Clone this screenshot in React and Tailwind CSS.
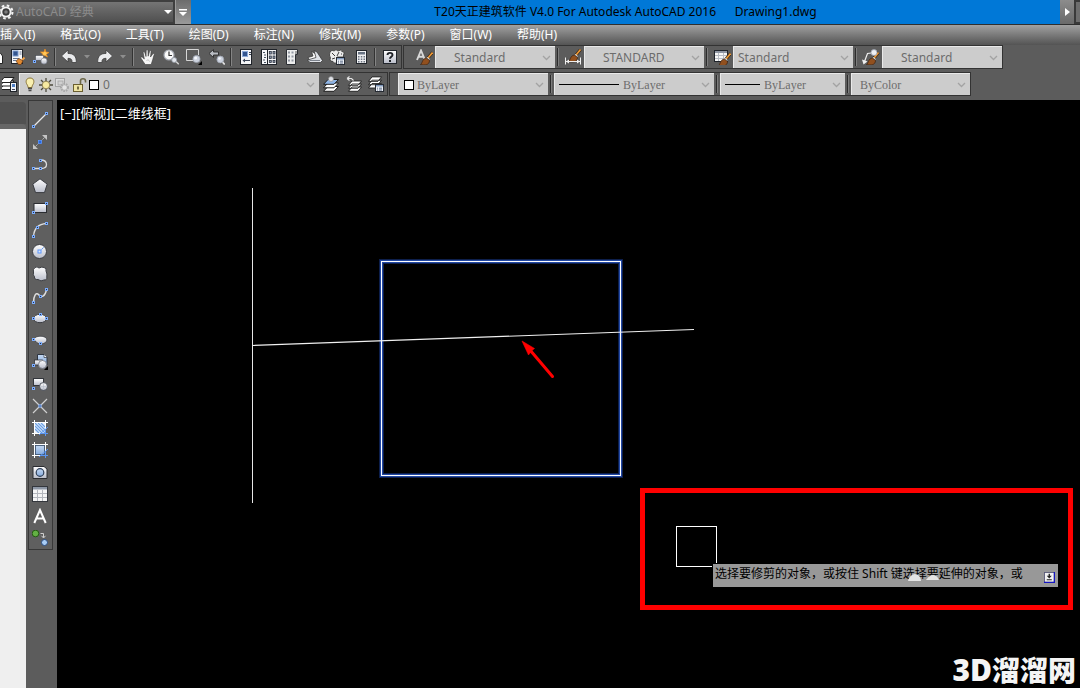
import React from 'react';

const UI = "font-['Noto_Sans','Noto_Sans_CJK_SC',sans-serif]";

/* ---------- shared drawing parts ---------- */

function Svg({ children, w = 16, h = 16 }) {
  return (
    <svg width={w} height={h} viewBox={`0 0 ${w} ${h}`} fill="none" aria-hidden="true" className="block shrink-0">
      <defs>
        <linearGradient id="plate" x1="0" y1="0" x2="0" y2="1">
          <stop offset="0" stopColor="#ffffff" />
          <stop offset="1" stopColor="#b9bdca" />
        </linearGradient>
        <linearGradient id="blueplate" x1="0" y1="0" x2="0" y2="1">
          <stop offset="0" stopColor="#c4d8f2" />
          <stop offset="1" stopColor="#86abdc" />
        </linearGradient>
      </defs>
      {children}
    </svg>
  );
}

const Grip = ({ x, y }) => (
  <rect x={x - 1} y={y - 1} width="2" height="2" fill="#25324a" stroke="#7badff" strokeWidth="1" />
);

const Brush = () => (
  <g>
    <path d="M11 8 L15.5 2.5" stroke="#3a2a1c" strokeWidth="3" />
    <path d="M11 8 L15.5 2.5" stroke="#f09a35" strokeWidth="1.6" />
    <path d="M10 7.5 L12.5 9.5" stroke="#d8d8d8" strokeWidth="1.4" />
    <path d="M3.5 14.5 C5.5 13.5 5 8.5 9.5 8 L12.5 10.5 C12.5 15 8 15.500 3.500 14.500Z" fill="#91501f" stroke="#3e2412" strokeWidth=".7" />
  </g>
);

const Lens = () => (
  <g>
    <path d="M13 12.500 L15.800 15.500" stroke="#e3e3e3" strokeWidth="1.800" />
    <circle cx="11.300" cy="10.500" r="3.400" fill="#cdd3df" stroke="#9da3b0" strokeWidth=".8" />
    <circle cx="10.500" cy="9.500" r="1.300" fill="#f4f6fa" />
  </g>
);

const Sheets = ({ top = '#ffffff' }) => (
  <g stroke="#1f1f1f" strokeWidth="1">
    <path d="M.5 15.300 L5 10.500 H15.500 L11 15.300Z" fill="#ffffff" />
    <path d="M.5 11.800 L5 7 H15.500 L11 11.800Z" fill="#ffffff" />
    <path d="M.5 8.300 L5 3.500 H15.500 L11 8.300Z" fill={top} />
  </g>
);

const MiniPanel = ({ x = 8, y = 8 }) => (
  <g>
    <rect x={x + 0.5} y={y + 0.5} width="8" height="7" fill="#eef1f6" stroke="#262b33" />
    <rect x={x + 1} y={y + 1} width="7" height="1.5" fill="#7f97bb" />
    <path d={`M${x + 2} ${y + 4.2}h1M${x + 4} ${y + 4.2}h3M${x + 2} ${y + 6}h1M${x + 4} ${y + 6}h3`} stroke="#4d5f7c" strokeWidth=".9" />
  </g>
);

/* ---------- standard toolbar icons ---------- */

const TB = {
  matchDoc: (
    <Svg>
      <rect x="1.5" y=".5" width="11" height="14" fill="#f5f6f8" stroke="#20242b" />
      <rect x="3" y="2" width="5" height="5" fill="#34568f" stroke="#7d9cd0" />
      <path d="M9.5 3h2M9.5 5h2M3 9.5h6M3 11.5h3" stroke="#65758f" />
      <path d="M12 11 L14.5 8.5" stroke="#eaa04b" strokeWidth="2" />
      <path d="M6 12 L9 9.5 L13 12 L11 15.5 H8.5Z" fill="#e08a32" stroke="#6a3710" strokeWidth=".7" />
    </Svg>
  ),
  blockEdit: (
    <Svg>
      <path d="M12 0 L12.8 3 L16 3.5 L13.3 5.3 L14.5 8 L11.8 6.4 L9 8 L10 5.2 L7.5 3 L11 3Z" fill="#ffc85a" stroke="#f08c1a" strokeWidth=".7" />
      <rect x="2.5" y="6.5" width="8" height="5" fill="url(#plate)" stroke="#454a54" strokeWidth=".6" />
      <circle cx="11" cy="12" r="3" fill="url(#plate)" stroke="#858b98" strokeWidth=".7" />
      <Grip x={1.5} y={12.5} />
    </Svg>
  ),
  undo: (
    <Svg>
      <path d="M.5 7 L7 1 V4.500 C12.500 4.300 15.500 7 15.300 13.500 H11 C11.300 10.500 10 9.300 7 9.300 V13Z" fill="#e9eaec" stroke="#3d3d3d" strokeWidth=".8" />
    </Svg>
  ),
  redo: (
    <Svg>
      <path d="M15.500 7 L9 1 V4.500 C3.500 4.300 .5 7 .7 13.500 H5 C4.700 10.500 6 9.300 9 9.300 V13Z" fill="#e9eaec" stroke="#3d3d3d" strokeWidth=".8" />
    </Svg>
  ),
  pan: (
    <Svg>
      <path
        d="M5.2 15.5 C4 13.5 2 11 .8 9 C.6 7.8 2 7.6 2.8 8.6 L4.3 10 L3.1 3.6 C3.2 2.5 4.5 2.4 4.8 3.5 L6 7.5 L6.2 1.6 C6.4 .5 7.8 .5 8 1.6 L8.2 7.2 L9.6 2.2 C10 1.2 11.2 1.5 11.1 2.6 L10.5 8 L12.9 4.7 C13.6 4 14.6 4.6 14.2 5.6 C13 9 12.5 12 11.2 15.5Z"
        fill="#f6f6f6" stroke="#3a3a3a" strokeWidth=".6"
      />
      <path d="M6.5 11.5 C8 10.5 9 11 9.5 12.5" stroke="#c2c2c2" />
    </Svg>
  ),
  zoomRealtime: (
    <Svg>
      <circle cx="6" cy="6" r="5" fill="#fafafa" stroke="#a4a8b0" strokeWidth="1.200" />
      <path d="M6 2.500 V6.500 H9" stroke="#333" strokeWidth="1.200" />
      <path d="M12.500 12 L15.800 15.300" stroke="#d5d5d5" strokeWidth="1.500" />
      <circle cx="11.200" cy="11" r="2.500" fill="#e3e6ec" stroke="#8f959f" strokeWidth=".8" />
    </Svg>
  ),
  zoomWindow: (
    <Svg>
      <path d="M8 11.5 H.5 V.5 H12.5 V6" stroke="#d6d6d6" />
      <circle cx="10.500" cy="10" r="3.600" fill="#cdd3df" stroke="#9da3b0" strokeWidth=".8" />
      <circle cx="9.700" cy="9" r="1.500" fill="#f4f6fa" />
      <path d="M16 12 V16 H12Z" fill="#000" />
    </Svg>
  ),
  zoomPrev: (
    <Svg>
      <path d="M0 4.500 L4.500 .5 V3 H9.500 V6 H4.500 V8.500Z" fill="#b9bcc2" stroke="#2a2a2a" strokeWidth=".9" />
      <Lens />
    </Svg>
  ),
  properties: (
    <Svg>
      <rect x="2.500" y=".5" width="11" height="15" fill="#f5f6f8" stroke="#1e2228" />
      <rect x="4.500" y="2.500" width="5" height="5" fill="#34568f" stroke="#8fabd8" />
      <path d="M11 3.5h2M11 5.5h2M5 11.5h7" stroke="#3c4658" />
      <path d="M7 9.5 v4 L4.500 11.5Z" fill="#3c4658" />
    </Svg>
  ),
  designCenter: (
    <Svg>
      <rect x=".5" y=".5" width="15" height="15" fill="#f5f6f8" stroke="#1e2228" />
      <path d="M6.5 1v14" stroke="#1e2228" />
      <path d="M2 3.5h2M3 6h2M3 8.5h2M2 11h2M3 13.500h2" stroke="#44505f" />
      <g fill="#8f9bb0" stroke="#2d3440" strokeWidth=".8">
        <rect x="8.300" y="2.500" width="2" height="2.500" /><rect x="12" y="2.500" width="2" height="2.500" />
        <rect x="8.300" y="7" width="2" height="2.500" /><rect x="12" y="7" width="2" height="2.500" />
        <rect x="8.300" y="11.500" width="2" height="2" /><rect x="12" y="11.500" width="2" height="2" />
      </g>
    </Svg>
  ),
  toolPalettes: (
    <Svg>
      <path d="M2.500 .5 H13.500 V5.500 H11.500 V15.500 H2.500Z" fill="#eceded" stroke="#2b2e33" />
      <g fill="#9197a2">
        <rect x="4" y="2.500" width="2" height="2" /><rect x="7.500" y="2.500" width="2" height="2" />
        <rect x="4" y="6.500" width="2" height="2" /><rect x="7.500" y="6.500" width="2" height="2" />
        <rect x="4" y="10.500" width="2" height="2" /><rect x="7.500" y="10.500" width="2" height="2" />
      </g>
      <path d="M12 2v3" stroke="#555" />
    </Svg>
  ),
  sheetSet: (
    <Svg>
      <path d="M1 8.500 L6 7 L4.500 2.500 L9 5 L12 9.500 L10 11.500 H3Z" fill="#fafafa" stroke="#303030" strokeWidth=".7" />
      <path d="M.5 11 L9 8.500 L7 1.500 L10 3 L15.500 11.500 L13.500 13.500 H3Z" fill="#dfe2e7" stroke="#2b2b2b" strokeWidth=".7" />
      <path d="M2.500 11.500 H13" stroke="#7c828c" />
    </Svg>
  ),
  markup: (
    <Svg w={17}>
      <path d="M1 3 Q3 0 5 2 Q7 -.5 9 2 Q12 0 13 2.500 Q16 3 14.500 6 L14.500 8 H8 V14 Q5 15 4 12.500 Q0 12 1.500 9 Q-.5 6 1 3Z" fill="#ececec" stroke="#333" strokeWidth=".8" />
      <path d="M3 4 L6 7 M10 3 L8 7 M3 10 L6 9 M12 5h1" stroke="#3b3b3b" />
      <MiniPanel x={7} y={8} />
    </Svg>
  ),
  calculator: (
    <Svg>
      <rect x="3.500" y="1.500" width="10" height="13" fill="#f0f1f3" stroke="#22262c" />
      <rect x="5" y="3" width="7" height="2.500" fill="#687383" />
      <g fill="#6b7380">
        <path d="M5 7h1.500v1.500H5zM7.800 7h1.500v1.500H7.800zM10.500 7H12v1.500h-1.500zM5 9.500h1.500V11H5zM7.800 9.500h1.500V11H7.800zM10.500 9.500H12V11h-1.500zM5 12h1.500v1.500H5zM7.800 12h1.500v1.500H7.800zM10.500 12H12v1.500h-1.500z" />
      </g>
    </Svg>
  ),
  help: (
    <Svg>
      <rect x="1.500" y="1.500" width="13" height="13" fill="url(#plate)" stroke="#22262c" />
      <path d="M5.500 6 C5.500 3.200 10.500 3.200 10.500 6 C10.500 7.800 8 7.800 8 9.800" stroke="#1d2025" strokeWidth="1.900" />
      <rect x="7" y="11" width="2" height="2" fill="#1d2025" />
    </Svg>
  ),
};

const layerMgr = (
  <Svg>
    <g stroke="#1f1f1f" fill="#ffffff">
      <path d="M-2 13.500 L2 8.500 H12 L8 13.500Z" /><path d="M-2 10 L2 5 H12 L8 10Z" /><path d="M-2 6.500 L2 1.500 H12 L8 6.500Z" />
    </g>
    <rect x="8.500" y="6.500" width="6" height="9" fill="#eef2f8" stroke="#1e2228" />
    <rect x="10" y="8" width="3" height="3" fill="#4f7fc4" />
    <path d="M10 13.500h3" stroke="#445" />
  </Svg>
);
const layerCurrent = (
  <Svg>
    <Sheets top="#8fb6e8" />
    <circle cx="8" cy="3" r="2.500" fill="#dfe2e8" stroke="#888" strokeWidth=".6" />
  </Svg>
);
const layerPrev = (
  <Svg>
    <path d="M2.500 15.300 L6 11 H15.500 L12 15.300Z M2.500 12.300 L6 8 H15.500 L12 12.300Z M2.500 9.300 L6 5 H15.500 L12 9.300Z" fill="#fff" stroke="#1f1f1f" strokeWidth=".9" />
    <path d="M1 2.500 H5.500 L7.500 4.500 M1 2.500 L3.500 .5 M1 2.500 L3.500 4.500" stroke="#e6e6e6" strokeWidth="1.100" />
  </Svg>
);
const layerStates = (
  <Svg w={17}>
    <path d="M.5 12 L4 7.500 H13.500 L10 12Z M.5 8.700 L4 4.200 H13.500 L10 8.700Z M.5 5.400 L4 .9 H13.500 L10 5.400Z" fill="#fff" stroke="#1f1f1f" strokeWidth=".9" />
    <MiniPanel x={7} y={8} />
  </Svg>
);

const textStyleIcon = (
  <Svg w={18}>
    <path d="M2 11 L6 1.500 L10 11 M3.500 7.800 H8.500" stroke="#d8d8d8" strokeWidth="1.900" />
    <g transform="translate(2 1)"><Brush /></g>
  </Svg>
);
const dimStyleIcon = (
  <Svg w={18}>
    <g transform="translate(1 -2)"><Brush /></g>
    <path d="M1.500 8.500 V15.500 M16.500 8.500 V15.500 M2 12.500 H16" stroke="#f0f0f0" />
    <path d="M5 10.500 L2 12.500 L5 14.500Z M13 10.500 L16 12.500 L13 14.500Z" fill="#f0f0f0" />
  </Svg>
);
const tableStyleIcon = (
  <Svg w={18}>
    <rect x="1.500" y="1.500" width="13" height="11" fill="#f6f6f6" stroke="#20242b" />
    <rect x="2" y="2" width="12" height="2" fill="#8f96a3" />
    <path d="M2 6.500h12M2 9.500h12M5.500 4v8M10.500 4v8" stroke="#b8bcc4" />
    <g transform="translate(2 2)"><Brush /></g>
  </Svg>
);
const leaderStyleIcon = (
  <Svg w={18}>
    <path d="M2.500 12.500 L5.500 4.500 L9.500 4" stroke="#f0f0f0" strokeWidth="1.200" />
    <path d="M0 10.500 L1.500 15.500 L5.500 12.500Z" fill="#f0f0f0" />
    <g transform="translate(1 1)"><Brush /></g>
    <circle cx="12" cy="3.500" r="3" fill="#eceff5" stroke="#9aa0ac" strokeWidth=".8" />
  </Svg>
);

/* ---------- draw toolbar icons ---------- */

const DRAW = [
  ['直线', <Svg><path d="M1.500 14.500 L14.500 1.500" stroke="#e8e8e8" strokeWidth="1.200" /><Grip x={1.5} y={14.5} /><Grip x={14.5} y={1.5} /></Svg>],
  ['构造线', <Svg><path d="M2 14 L14 2" stroke="#b9b9b9" strokeDasharray="2 1" /><path d="M10 1 H15 V6Z M1 10 V15 H6Z" fill="#c4c4c4" /><rect x="6.500" y="6.500" width="3" height="3" fill="#2868e0" stroke="#5a96ff" strokeWidth=".8" /></Svg>],
  ['多段线', <Svg><path d="M1.500 12.500 H9 C12 12.500 14.500 11 14.500 8.500 C14.500 5.500 12 4 8.500 4" stroke="#dedede" strokeWidth="1.300" /><Grip x={1.5} y={12.5} /><Grip x={8.5} y={12.5} /><Grip x={8.5} y={4.5} /></Svg>],
  ['多边形', <Svg><path d="M8 .8 L15.200 6.100 L12.500 14.600 H3.500 L.8 6.100Z" fill="url(#plate)" stroke="#3b3d42" /></Svg>],
  ['矩形', <Svg><rect x="2" y="3.500" width="12.500" height="9" fill="url(#plate)" stroke="#2b2d31" /><Grip x={1.5} y={12.5} /><Grip x={14.5} y={3.5} /></Svg>],
  ['圆弧', <Svg><path d="M1.500 14.500 C2 7 6 2 14.500 1.500" stroke="#dedede" strokeWidth="1.300" /><Grip x={1.5} y={14.5} /><Grip x={5.5} y={5.5} /><Grip x={14.5} y={1.5} /></Svg>],
  ['圆', <Svg><circle cx="7.500" cy="7.500" r="7" fill="url(#plate)" stroke="#3b3d42" /><path d="M8 7 L12 3" stroke="#4f8cf0" strokeDasharray="2 1" /><rect x="6" y="6" width="3" height="3" fill="#dfe8f7" stroke="#5a96ff" /></Svg>],
  ['修订云线', <Svg><path d="M3 1.500 Q5 0 7 2 Q10 .5 12 1.500 Q15 2 14 5 Q15.500 8 14.800 11 Q15.500 14 12 14 Q9 16 6 13.500 Q2 14 2.500 10.500 Q.5 9 1.500 7 Q.5 3 3 1.500Z" fill="url(#plate)" stroke="#3b3d42" /></Svg>],
  ['样条曲线', <Svg><path d="M1.500 14.500 C1.500 8 4 4 6.500 6.500 C9 10 13 9 14.500 1.500" stroke="#dedede" strokeWidth="1.500" /><Grip x={1.5} y={14.5} /><Grip x={8.5} y={8.5} /><Grip x={14.5} y={1.5} /></Svg>],
  ['椭圆', <Svg><ellipse cx="8" cy="8.500" rx="6.500" ry="4.200" fill="url(#plate)" stroke="#3b3d42" /><Grip x={1.5} y={8.5} /><Grip x={8.5} y={4.5} /><Grip x={14.5} y={8.5} /></Svg>],
  ['椭圆弧', <Svg><path d="M1.500 8 C2 3 14.800 3 14.800 7.800 C14.800 10.500 11.500 12 8.500 12 C6.500 12 5 11 4 9.500Z" fill="url(#plate)" stroke="#3b3d42" strokeWidth=".8" /><Grip x={1.5} y={7.5} /><Grip x={8.5} y={11.5} /></Svg>],
  ['插入块', <Svg><path d="M5.500 .5 H12 L15 3.500 V11 H5.500Z" fill="url(#blueplate)" stroke="#2d3440" /><path d="M12 .5 V3.500 H15" fill="#fff" stroke="#2d3440" strokeWidth=".7" /><rect x="2.500" y="6" width="8" height="5" fill="url(#plate)" stroke="#33363c" strokeWidth=".8" /><circle cx="10.500" cy="10.500" r="4" fill="url(#plate)" stroke="#70757f" strokeWidth=".8" /><Grip x={1.5} y={11.5} /><path d="M16 12 V16 H12Z" fill="#000" /></Svg>],
  ['创建块', <Svg><rect x="1.500" y="2.500" width="10" height="7" fill="url(#plate)" stroke="#33363c" /><circle cx="11.500" cy="10.500" r="4" fill="url(#plate)" stroke="#42464e" strokeWidth=".9" /><path d="M11.500 7v7M8 10.500h7" stroke="#b4bac6" strokeWidth=".6" /><Grip x={1.5} y={12.5} /></Svg>],
  ['点', <Svg><path d="M1 1 L15 15 M15 1 L1 15" stroke="#cfcfcf" strokeWidth="1.200" /><Grip x={8} y={8} /></Svg>],
  ['图案填充', <Svg><rect x="3" y="3" width="10" height="10" fill="#eaf2fc" /><path d="M3 3 L13 13 M6 3 L13 10 M9 3 L13 7 M3 6 L10 13 M3 9 L7 13" stroke="#6ba0e4" strokeWidth="1.200" /><path d="M2.500 0 V16 M13.500 0 V9 M0 2.500 H16 M0 13.500 H8" stroke="#fff" /><path d="M7 15 L16 7 M13.500 9v7 M8 13.500h8" stroke="#5b96f2" /></Svg>],
  ['渐变色', <Svg><rect x="3.500" y="3.500" width="9" height="9" fill="url(#blueplate)" stroke="#3f5675" strokeWidth=".8" /><path d="M2.500 0 V16 M13.500 0 V9 M0 2.500 H16 M0 13.500 H8" stroke="#fff" /><path d="M7 15 L16 7 M13.500 9v7 M8 13.500h8" stroke="#5b96f2" /></Svg>],
  ['面域', <Svg><path d="M1 2.500 H12 L15 5 V14.500 H1Z" fill="url(#plate)" stroke="#2b2d31" /><circle cx="8" cy="8.500" r="3.800" fill="url(#blueplate)" stroke="#2f4059" strokeWidth="1.200" /></Svg>],
  ['表格', <Svg><rect x=".5" y=".5" width="15" height="15" fill="#f4f4f4" stroke="#33363c" /><rect x="1" y="1" width="14" height="2.500" fill="#8c96a5" /><path d="M1 7.500h14M1 11.500h14M5.500 4v11M10.500 4v11" stroke="#b3b6bc" /></Svg>],
  ['多行文字', <Svg><path d="M2.300 15 L8 2 L13.700 15 M4.300 10.500 H11.700" stroke="#fff" strokeWidth="2" /></Svg>],
  ['添加选定对象', <Svg><circle cx="3.500" cy="3.500" r="3.300" fill="#63b044" stroke="#245a14" /><path d="M8.500 3.500 H11.500 V7.500 M9.500 5.800 L11.500 8 L13.500 5.800" stroke="#cfcfcf" /><circle cx="12.500" cy="12.500" r="3" fill="#a9cdf5" stroke="#2a4c80" /></Svg>],
];

/* ---------- controls ---------- */

const Chevron = () => (
  <svg width="9" height="6" viewBox="0 0 9 6" fill="none" aria-hidden="true" className="pointer-events-none shrink-0">
    <path d="M1 1 L4.500 4.500 L8 1" stroke="#a3a3a3" strokeWidth="1.300" />
  </svg>
);

function IconButton({ label, className = 'w-[23px]', children }) {
  return (
    <button type="button" aria-label={label} className={`flex h-full shrink-0 items-center justify-center overflow-hidden ${className}`}>
      {children}
    </button>
  );
}

const Caret = ({ label }) => (
  <IconButton label={label} className="w-[14px]">
    <svg width="6" height="4" viewBox="0 0 6 4" aria-hidden="true"><path d="M0 0 H6 L3 3.500Z" fill="#8e8e8e" /></svg>
  </IconButton>
);

const Divider = () => (
  <span className="flex h-full w-[6px] shrink-0 items-center justify-center">
    <span className="h-[18px] w-[2px] border-l border-[#333333] bg-[#858585]" />
  </span>
);

const Handle = () => (
  <span className="flex h-full w-[6px] shrink-0 items-center justify-center">
    <span className="h-[18px] w-[2px] border-l border-[#2c2c2c] bg-[#7d7d7d]" />
  </span>
);

function Drop({ label, value, className = '', pad = 'pl-1', prefix }) {
  return (
    <div className={`flex h-full shrink-0 items-center border-t border-l border-[#e9e9e9] bg-[#cccccc] pr-1 ${className}`}>
      {prefix}
      <select aria-label={label} defaultValue={value} className={`h-full min-w-0 flex-1 appearance-none bg-transparent text-[#6c6c6c] outline-none ${pad}`}>
        <option>{value}</option>
      </select>
      <Chevron />
    </div>
  );
}

const Swatch = () => <span className="h-[10px] w-[10px] shrink-0 border border-black bg-white" />;

const STYLES = [
  ['文字样式', textStyleIcon, 'Standard', 'pl-[18px]'],
  ['标注样式', dimStyleIcon, 'STANDARD', 'pl-[18px]'],
  ['表格样式', tableStyleIcon, 'Standard', 'pl-1'],
  ['多重引线样式', leaderStyleIcon, 'Standard', 'pl-[18px]'],
];

const MENU = ['插入(I)', '格式(O)', '工具(T)', '绘图(D)', '标注(N)', '修改(M)', '参数(P)', '窗口(W)', '帮助(H)'];

const bar = 'flex h-6 shrink-0 items-center border border-[#333333] bg-[#5c5c5c]';

function TitleBar() {
  return (
    <header className="flex h-[25px] items-stretch border-b border-[#2f2f2f] bg-[#0078d7] text-[12px]">
      <div className="flex w-[175px] shrink-0 items-center border-2 border-l-0 border-[#3f3f3f] bg-linear-to-b from-[#757575] to-[#505050] pr-[1px]">
        <svg width="14" height="16" viewBox="2 0 14 16" aria-hidden="true" className="shrink-0">
          <circle cx="8" cy="8" r="4.600" fill="none" stroke="#f2f2f2" strokeWidth="2" />
          <circle cx="8" cy="8" r="6.500" fill="none" stroke="#f2f2f2" strokeWidth="2" strokeDasharray="2.600 2.500" />
          <circle cx="8" cy="8" r="3.400" fill="#3b3b3b" />
          <circle cx="8" cy="8" r="1.800" fill="#7b7b7b" />
        </svg>
        <select aria-label="工作空间" defaultValue="AutoCAD 经典" className="h-full min-w-0 flex-1 appearance-none bg-transparent pl-[2px] text-[#8c8c8c] outline-none">
          <option>AutoCAD 经典</option>
        </select>
        <svg width="8" height="4" viewBox="0 0 8 4" aria-hidden="true"><path d="M0 0 H8 L4 4Z" fill="#fff" /></svg>
      </div>
      <button type="button" aria-label="自定义快速访问工具栏" className="flex w-4 shrink-0 items-center justify-center border-l border-[#9a9a9a] bg-linear-to-b from-[#6c6c6c] to-[#9a9a9a] pr-[2px]">
        <svg width="8" height="7" viewBox="0 0 8 7" aria-hidden="true"><path d="M0 0 H8 V1.500 H0Z M0 3 H8 L4 7Z" fill="#fff" /></svg>
      </button>
      <h1 className="flex-1 self-center text-center whitespace-pre text-black">T20天正建筑软件 V4.0 For Autodesk AutoCAD 2016{'      '}Drawing1.dwg</h1>
      <button type="button" aria-label="展开搜索" className="flex w-[14px] shrink-0 items-center justify-center bg-linear-to-b from-[#8c8c8c] to-[#6a6a6a]">
        <svg width="5" height="8" viewBox="0 0 5 8" aria-hidden="true"><path d="M0 0 L5 4 L0 8Z" fill="#fff" /></svg>
      </button>
      <span className="w-[6px] shrink-0 border-2 border-r-0 border-[#3a3a3a] bg-[#6e6e6e]" />
    </header>
  );
}

function StandardBar() {
  return (
    <div className={`${bar} border-l-0`}>
      <IconButton label="粘贴" className="w-[6px]">
        <svg width="6" height="16" viewBox="0 0 6 16" aria-hidden="true"><path d="M-2 3.500 H0 L2.500 7 V14.500 H-2Z" fill="#fff" stroke="#222" /></svg>
      </IconButton>
      <IconButton label="特性匹配">{TB.matchDoc}</IconButton>
      <IconButton label="块编辑器">{TB.blockEdit}</IconButton>
      <Divider />
      <IconButton label="放弃" className="w-[22px]">{TB.undo}</IconButton>
      <Caret label="放弃列表" />
      <IconButton label="重做" className="w-[22px]">{TB.redo}</IconButton>
      <Caret label="重做列表" />
      <Divider />
      <IconButton label="实时平移">{TB.pan}</IconButton>
      <IconButton label="实时缩放">{TB.zoomRealtime}</IconButton>
      <IconButton label="窗口缩放">{TB.zoomWindow}</IconButton>
      <IconButton label="缩放上一个">{TB.zoomPrev}</IconButton>
      <Divider />
      <IconButton label="特性">{TB.properties}</IconButton>
      <IconButton label="设计中心">{TB.designCenter}</IconButton>
      <IconButton label="工具选项板">{TB.toolPalettes}</IconButton>
      <IconButton label="图纸集管理器">{TB.sheetSet}</IconButton>
      <IconButton label="标记集管理器">{TB.markup}</IconButton>
      <IconButton label="快速计算器">{TB.calculator}</IconButton>
      <Divider />
      <IconButton label="帮助">{TB.help}</IconButton>
    </div>
  );
}

function StylesBar() {
  return (
    <div className={bar}>
      {STYLES.map(([label, icon, value, pad], i) => (
        <React.Fragment key={label}>
          {i > 0 ? <Handle /> : <span className="w-2 shrink-0" />}
          <IconButton label={label}>{icon}</IconButton>
          <Drop label={label} value={value} pad={pad} className="w-[120px]" />
        </React.Fragment>
      ))}
    </div>
  );
}

const layerPrefix = (
  <span className="flex shrink-0 items-center gap-px pl-[2px]">
    <Svg>
      <path d="M8 1 C4.500 1 3.500 4 4.500 6.500 C5.200 8 6 8.500 6 10.500 H10 C10 8.500 10.800 8 11.500 6.500 C12.500 4 11.500 1 8 1Z" fill="#f8efb0" stroke="#8a7434" />
      <path d="M6 11.500h4M6.500 13.500h3" stroke="#4a4a4a" strokeWidth="1.400" />
    </Svg>
    <Svg w={14}>
      <path d="M7 1v3M7 12v3M0 8h3M11 8h3M2 3l2 2M12 3l-2 2M2 13l2-2M12 13l-2-2" stroke="#4c4a3c" strokeWidth="1.300" />
      <circle cx="7" cy="8" r="3.800" fill="#f6e9a0" stroke="#77683a" strokeWidth=".8" />
    </Svg>
    <Svg>
      <rect x="1.500" y="1.500" width="9" height="8" fill="#dcdcdc" stroke="#a4a4a4" />
      <rect x="4" y="4" width="5" height="4" fill="#d0d0d0" stroke="#a4a4a4" strokeWidth=".8" />
      <circle cx="10.500" cy="10.500" r="3.500" fill="#c8c8c8" stroke="#a8a8a8" strokeWidth="2" strokeDasharray="1.500 1" />
      <circle cx="10.500" cy="10.500" r="2" fill="#e4e4e4" />
    </Svg>
    <Svg>
      <path d="M9.500 8 V4 C9.500 1 14.500 1 14.500 4 V5.500" stroke="#6c6748" strokeWidth="1.600" />
      <rect x="2.500" y="7.500" width="9" height="7" fill="#efe4a4" stroke="#6b5f30" />
      <path d="M7 9.500v3" stroke="#4d4420" strokeWidth="1.500" />
    </Svg>
    <span className="flex pl-px"><Swatch /></span>
  </span>
);

const serif = "text-[12px] font-['Liberation_Serif','Noto_Sans_CJK_SC',serif]";

function LineSample({ className }) {
  return <span className={`h-px shrink-0 bg-black ${className}`} />;
}

export default function App() {
  return (
    <div className={`flex min-h-screen flex-col overflow-hidden bg-[#5c5c5c] ${UI}`}>
      <TitleBar />

      <nav aria-label="菜单" className="flex h-5 shrink-0 items-center gap-[25px] bg-linear-to-b from-[#a2a2a2] to-[#545454] text-[12px] leading-5 text-white">
        {MENU.map((m) => (
          <button key={m} type="button" className="shrink-0">{m}</button>
        ))}
      </nav>

      <div className="flex flex-col gap-[3px] pb-1 text-[12px]">
        <div className="flex gap-px">
          <StandardBar />
          <StylesBar />
        </div>
        <div className="flex gap-px">
          <div className={`${bar} border-l-0`}>
            <IconButton label="图层特性管理器" className="w-[19px]">{layerMgr}</IconButton>
            <Drop label="图层" value="0" className="w-[300px]" prefix={layerPrefix} />
            <IconButton label="将对象的图层置为当前">{layerCurrent}</IconButton>
            <IconButton label="上一个图层">{layerPrev}</IconButton>
            <IconButton label="图层状态管理器" className="w-[22px]">{layerStates}</IconButton>
          </div>
          <div className={`${bar} ${serif}`}>
            <span className="w-2 shrink-0" />
            <Drop label="颜色" value="ByLayer" className="w-[150px] pl-[5px]" pad="pl-[3px]" prefix={<Swatch />} />
            <Handle />
            <Drop label="线型" value="ByLayer" className="w-[160px] pl-1" prefix={<LineSample className="w-[60px]" />} />
            <Handle />
            <Drop label="线宽" value="ByLayer" className="w-[125px] pl-1" prefix={<LineSample className="w-[35px]" />} />
            <Handle />
            <Drop label="打印样式" value="ByColor" className="w-[119px]" pad="pl-2" />
          </div>
        </div>
      </div>

      <div className="flex flex-1">
        <aside className="flex w-[26px] shrink-0 flex-col pt-[2px]">
          <div className="h-[22px] rounded-tr bg-[#515151]" />
          <div className="h-[5px] rounded-tr-sm bg-[#676767]" />
          <div className="flex-1 bg-[#efefef]" />
        </aside>

        <div role="toolbar" aria-label="绘图" className="ml-[2px] flex w-[25px] shrink-0 flex-col self-start border border-[#383838] bg-[#5f5f5f] pt-2">
          {DRAW.map(([label, icon]) => (
            <button key={label} type="button" aria-label={label} className="flex h-[22px] items-center justify-center pr-px">
              {icon}
            </button>
          ))}
        </div>

        <main className="relative ml-1 min-h-[588px] flex-1 overflow-hidden bg-black">
          <p className="pt-1 pl-[3px] text-[13px] leading-[18px] text-white">[−][俯视][二维线框]</p>

          <svg aria-hidden="true" className="absolute inset-0 h-full w-full" fill="none">
            <path d="M195.500 88 V403" stroke="#e6e6e6" />
            <rect x="324.500" y="161.500" width="239" height="214" stroke="#0d1f4c" strokeWidth="5" />
            <rect x="324.500" y="161.500" width="239" height="214" stroke="#2248a4" strokeWidth="3" />
            <rect x="324.500" y="161.500" width="239" height="214" stroke="#ffffff" />
            <path d="M195.500 245.500 L637 229.500" stroke="#f0f0f0" strokeWidth="1.200" />
            <path d="M473 250 L495.500 276.500" stroke="#ff0000" strokeWidth="3" strokeLinecap="round" />
            <path d="M465 241 L477.500 248.500 L475 250.500 L471.500 255Z" fill="#ff0000" stroke="#ff0000" strokeWidth=".6" />
          </svg>

          <div className="absolute top-[388px] left-[583px] h-[122px] w-[433px] border-[5px] border-[#ff0000]" />
          <div className="absolute top-[426px] left-[619px] h-[41px] w-[41px] border border-white" />
          <div role="tooltip" className="absolute top-[463px] left-[655px] flex h-[25px] w-[347px] items-center justify-between border border-black bg-[#989898] pr-[3px] pl-[2px] text-[12px] whitespace-nowrap text-black">
            <span className="pb-[3px] leading-5">选择要修剪的对象，或按住 Shift 键选择要延伸的对象，或</span>
            <button type="button" aria-label="更多选项" className="mt-1 shrink-0">
              <svg width="11" height="11" viewBox="0 0 12 12" aria-hidden="true">
                <rect width="12" height="12" fill="#1414c4" />
                <rect x="0" y="0" width="10.500" height="10.500" fill="#5a5a78" />
                <rect x="1" y="1" width="9.500" height="9.500" fill="#f2f2f2" />
                <path d="M5 2h1.500v2h2L5.750 7 3 4h2z M3 8h5.500v1H3z" fill="#222" />
              </svg>
            </button>
          </div>
          <svg width="36" height="10" viewBox="0 0 36 10" aria-hidden="true" className="absolute top-[472px] left-[851px]">
            <path d="M0 9 C1 5 4 2 7 2 C10 2 13 5 13 9Z M18 8 C20 5 22 3 25 3 C28 3 30 5 31 8Z" fill="#e4e4e4" />
          </svg>

          <div className="absolute right-1 bottom-0 flex items-center pb-[2px] leading-8 font-black text-[#f4f4f4]">
            <span className="text-[30px]">3D</span>
            <span className="text-[28px]">溜溜网</span>
          </div>
        </main>
      </div>
    </div>
  );
}
